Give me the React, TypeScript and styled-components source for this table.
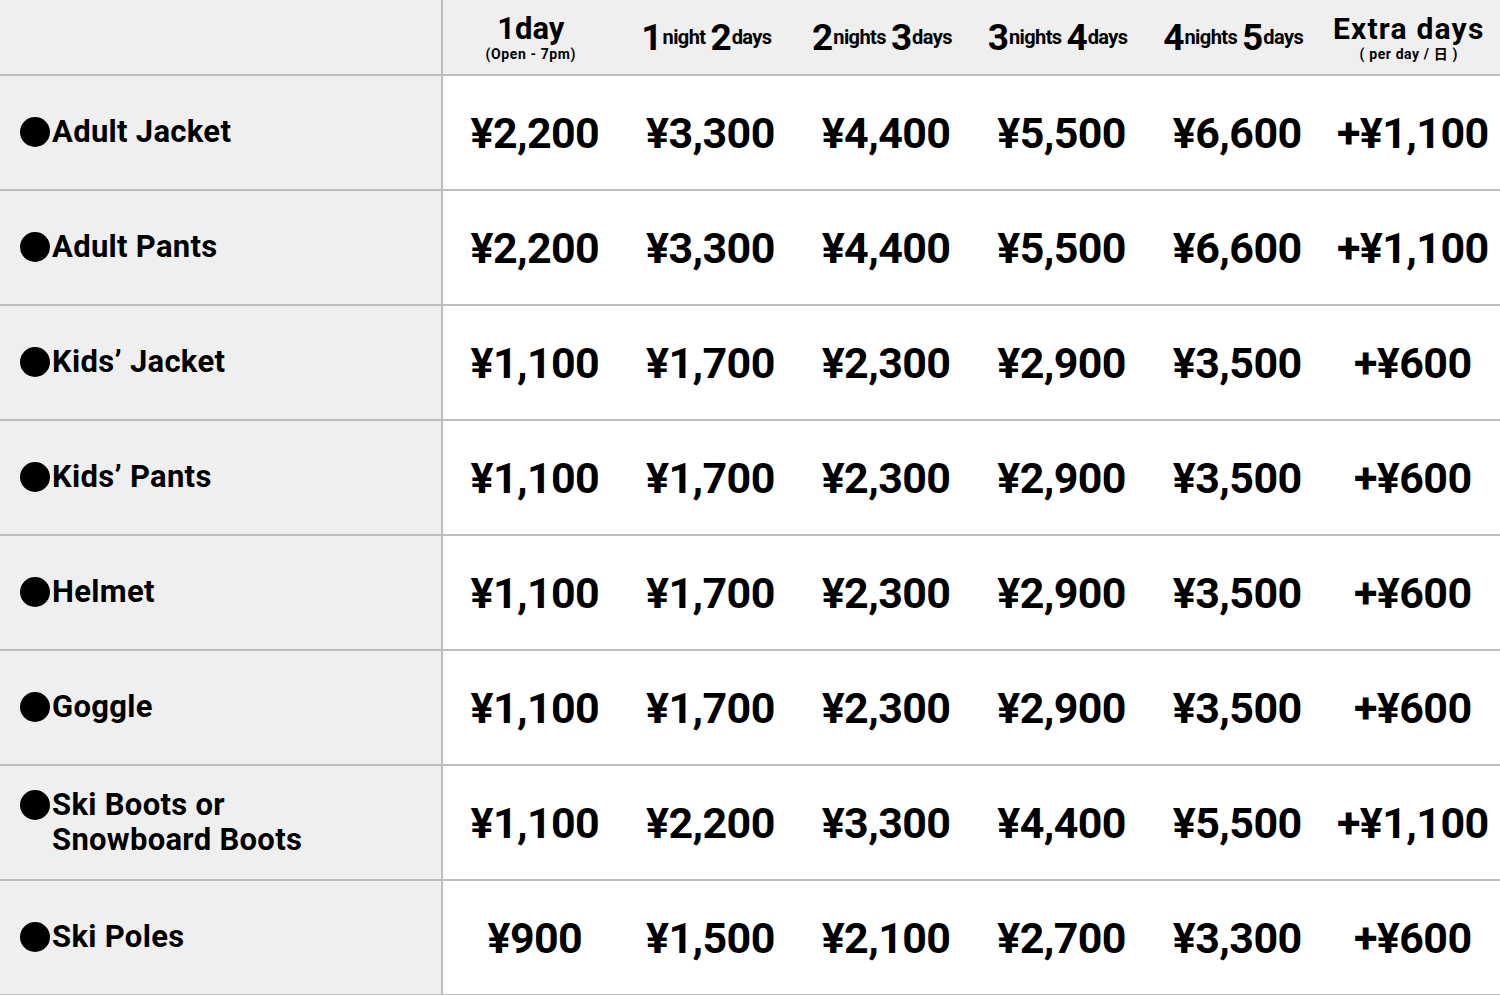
import React from "react";
import styled, { createGlobalStyle } from "styled-components";

const GlobalStyle = createGlobalStyle`
    html, body {
        margin: 0;
        padding: 0;
        background: #ffffff;
    }
    body {
        font-family: Roboto, "Noto Sans CJK JP", "Liberation Sans", sans-serif;
        color: #000000;
    }
`;

const LINE = "#bdbdbd";
const SHADE = "#efefef";

const StyledTable = styled.div`
    width: 1500px;
    height: 995px;
    overflow: hidden;
`;

const Row = styled.div<{ $head?: boolean }>`
    display: grid;
    grid-template-columns: 443px repeat(6, 175.6px);
    height: ${(p) => (p.$head ? "74px" : "113px")};
    border-bottom: 2px solid ${LINE};
    background: ${(p) => (p.$head ? SHADE : "#ffffff")};
`;

const LabelCell = styled.div`
    display: flex;
    align-items: center;
    background: ${SHADE};
    border-right: 2px solid ${LINE};
    padding-left: 20px;
`;

const Bullet = styled.span`
    flex: none;
    width: 30px;
    height: 30px;
    border-radius: 50%;
    background: #000000;
    margin-right: 2px;
    align-self: flex-start;
    margin-top: 3px;
`;

const Label = styled.div`
    display: flex;
    align-items: flex-start;
    font-size: 31px;
    font-weight: 700;
    line-height: 35px;
    letter-spacing: 0.3px;
    margin-top: -2px;
`;

const Price = styled.div`
    display: flex;
    align-items: center;
    justify-content: center;
    font-size: 43px;
    font-weight: 700;
    letter-spacing: -0.6px;
    padding-top: 1px;
    padding-left: 8px;
`;

const HeadCell = styled.div`
    display: flex;
    flex-direction: column;
    align-items: center;
    justify-content: center;
    font-weight: 700;
    line-height: 1;
`;

const HeadMain = styled.div<{ $size: number; $spacing?: number }>`
    font-size: ${(p) => p.$size}px;
    letter-spacing: ${(p) => p.$spacing ?? 0}px;
    white-space: nowrap;
`;

const HeadSub = styled.div`
    font-size: 14px;
    margin-top: 3px;
    letter-spacing: 0.6px;
`;

const Num = styled.span`
    font-size: 37px;
    letter-spacing: -2px;
    vertical-align: -0.15em;
    margin-right: 2px;
`;

const Word = styled.span`
    font-size: 20px;
    letter-spacing: -0.6px;
`;

type Stay = { nights: number; days: number };

const stays: Stay[] = [
    { nights: 1, days: 2 },
    { nights: 2, days: 3 },
    { nights: 3, days: 4 },
    { nights: 4, days: 5 },
];

type Item = { name: string[]; prices: string[] };

const items: Item[] = [
    { name: ["Adult Jacket"], prices: ["¥2,200", "¥3,300", "¥4,400", "¥5,500", "¥6,600", "+¥1,100"] },
    { name: ["Adult Pants"], prices: ["¥2,200", "¥3,300", "¥4,400", "¥5,500", "¥6,600", "+¥1,100"] },
    { name: ["Kids’ Jacket"], prices: ["¥1,100", "¥1,700", "¥2,300", "¥2,900", "¥3,500", "+¥600"] },
    { name: ["Kids’ Pants"], prices: ["¥1,100", "¥1,700", "¥2,300", "¥2,900", "¥3,500", "+¥600"] },
    { name: ["Helmet"], prices: ["¥1,100", "¥1,700", "¥2,300", "¥2,900", "¥3,500", "+¥600"] },
    { name: ["Goggle"], prices: ["¥1,100", "¥1,700", "¥2,300", "¥2,900", "¥3,500", "+¥600"] },
    { name: ["Ski Boots or", "Snowboard Boots"], prices: ["¥1,100", "¥2,200", "¥3,300", "¥4,400", "¥5,500", "+¥1,100"] },
    { name: ["Ski Poles"], prices: ["¥900", "¥1,500", "¥2,100", "¥2,700", "¥3,300", "+¥600"] },
];

function HeaderRow() {
    return (
        <Row $head>
            <LabelCell />
            <HeadCell>
                <HeadMain $size={31}>1day</HeadMain>
                <HeadSub>(Open - 7pm)</HeadSub>
            </HeadCell>
            {stays.map((s) => (
                <HeadCell key={s.nights}>
                    <HeadMain $size={20}>
                        <Num>{s.nights}</Num>
                        <Word>{s.nights === 1 ? "night" : "nights"}</Word>{" "}
                        <Num>{s.days}</Num>
                        <Word>days</Word>
                    </HeadMain>
                </HeadCell>
            ))}
            <HeadCell>
                <HeadMain $size={30} $spacing={1.2}>
                    Extra days
                </HeadMain>
                <HeadSub>( per day / 日 )</HeadSub>
            </HeadCell>
        </Row>
    );
}

function ItemRow({ name, prices }: Item) {
    return (
        <Row>
            <LabelCell>
                <Label>
                    <Bullet />
                    <div>
                        {name.map((line) => (
                            <div key={line}>{line}</div>
                        ))}
                    </div>
                </Label>
            </LabelCell>
            {prices.map((price, i) => (
                <Price key={i}>{price}</Price>
            ))}
        </Row>
    );
}

function App() {
    return (
        <>
            <GlobalStyle />
            <StyledTable>
                <HeaderRow />
                {items.map((item) => (
                    <ItemRow key={item.name.join(" ")} name={item.name} prices={item.prices} />
                ))}
            </StyledTable>
        </>
    );
}

export default App;
